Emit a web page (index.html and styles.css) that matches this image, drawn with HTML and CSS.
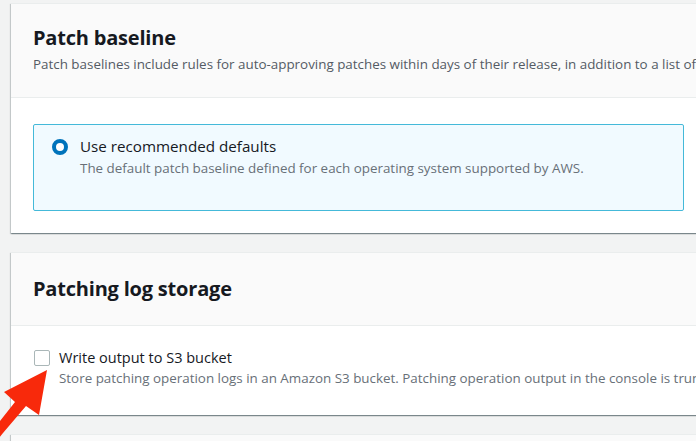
FILE: index.html
```html
<!DOCTYPE html>
<html lang="en">
<head>
<meta charset="utf-8">
<title>Patch settings</title>
<link rel="stylesheet" href="styles.css">
</head>
<body>
<main class="page">
  <section class="card">
    <header class="card-header">
      <h2 class="card-title">Patch baseline</h2>
      <p class="card-desc">Patch baselines include rules for auto-approving patches within days of their release, in addition to a list of approved and rejected patches.</p>
    </header>
    <div class="card-body card-body-1">
      <div class="tile">
        <span class="radio"></span>
        <div class="tile-text">
          <div class="label label-lg">Use recommended defaults</div>
          <div class="hint hint-tile">The default patch baseline defined for each operating system supported by AWS.</div>
        </div>
      </div>
    </div>
  </section>

  <section class="card">
    <header class="card-header card-header-2">
      <h2 class="card-title">Patching log storage</h2>
    </header>
    <div class="card-body card-body-2">
      <div class="check-row">
        <span class="checkbox"></span>
        <div class="check-text">
          <div class="label">Write output to S3 bucket</div>
          <div class="hint">Store patching operation logs in an Amazon S3 bucket. Patching operation output in the console is truncated after 2500 characters.</div>
        </div>
      </div>
    </div>
  </section>

  <section class="card card-stub"></section>
</main>

<svg class="arrow" viewBox="0 360 60 81" width="60" height="81" aria-hidden="true">
  <polygon points="47,370 39,415 26,406 3,433 -5,443 -8,431 15,402 4,392" fill="#f8290b"/>
</svg>
</body>
</html>
```

FILE: styles.css
```css
html, body {
  margin: 0;
  padding: 0;
  background: #f2f3f3;
  overflow: hidden;
  width: 696px;
  height: 441px;
}

body {
  font-family: "Open Sans", "Noto Sans", Arial, sans-serif;
  color: #16191f;
  position: relative;
}

.page {
  padding: 3px 0 0 11px;
  display: flex;
  flex-direction: column;
  gap: 19px;
}

.card {
  width: 695px;
  background: #ffffff;
  border-top: 1px solid #eaeded;
  box-shadow: 0 1px 1px 0 rgba(0, 28, 36, 0.3), 1px 1px 1px 0 rgba(0, 28, 36, 0.15), -1px 1px 1px 0 rgba(0, 28, 36, 0.15);
}

.card-header {
  background: #fafafa;
  border-bottom: 1px solid #eaeded;
  padding: 21px 22px 22px;
}

.card-header-2 {
  padding: 23px 22px 23px;
}

.card-title {
  margin: 0;
  font-size: 20px;
  line-height: 26px;
  font-weight: 700;
  letter-spacing: -0.2px;
}

.card-desc {
  margin: 2px 0 0;
  font-size: 13.4px;
  line-height: 22px;
  color: #545b64;
  white-space: nowrap;
}

.card-body-1 {
  padding: 26px 22px 22px 22px;
}

.tile {
  display: flex;
  align-items: flex-start;
  gap: 12px;
  background: #f1faff;
  border: 1px solid #44b9d9;
  border-radius: 2px;
  padding: 11px 18px 20px 18px;
  height: 54px;
}

.radio {
  flex: none;
  width: 8px;
  height: 8px;
  margin-top: 3px;
  border: 4px solid #0073bb;
  border-radius: 50%;
  background: #ffffff;
}

.label {
  font-size: 14.5px;
  line-height: 20px;
  color: #16191f;
  white-space: nowrap;
}

.label-lg {
  font-size: 15.2px;
}

.hint {
  font-size: 13.4px;
  line-height: 21px;
  color: #687078;
  white-space: nowrap;
}

.hint-tile {
  margin-top: 2px;
}

.card-body-2 {
  padding: 22px 22px 26px 23px;
}

.check-row {
  display: flex;
  align-items: flex-start;
  gap: 9px;
}

.checkbox {
  flex: none;
  width: 14px;
  height: 14px;
  margin-top: 2px;
  border: 1px solid #aab7b8;
  border-radius: 2px;
  background: #ffffff;
}

.card-stub {
  height: 40px;
  background: #fafafa;
}

.arrow {
  position: absolute;
  left: 0;
  top: 360px;
}
```
